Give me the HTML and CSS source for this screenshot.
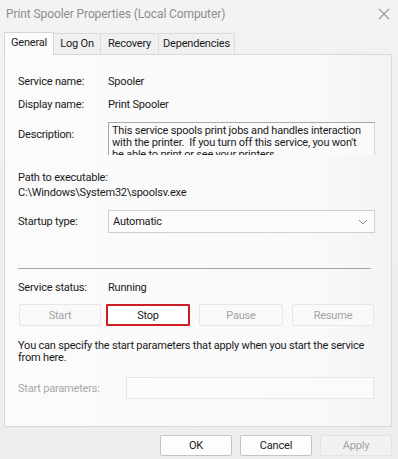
FILE: index.html
```html
<!DOCTYPE html>
<html lang="en">
<head>
    <meta charset="UTF-8">
    <title>Print Spooler Properties (Local Computer)</title>
    <link rel="stylesheet" href="styles.css">
</head>
<body>
    <div class="window">
        <div class="titlebar">
            <span class="title">Print Spooler Properties (Local Computer)</span>
            <svg class="close" width="12" height="12" viewBox="0 0 12 12">
                <path d="M1 1 L11 11 M11 1 L1 11" stroke="#9a9a9a" stroke-width="1.1" fill="none"/>
            </svg>
        </div>

        <div class="tabs">
            <div class="tab active tab-general">General</div>
            <div class="tab tab-logon">Log On</div>
            <div class="tab tab-recovery">Recovery</div>
            <div class="tab tab-deps">Dependencies</div>
        </div>

        <div class="panel">
            <div class="row row-name">
                <span class="label">Service name:</span>
                <span class="value">Spooler</span>
            </div>
            <div class="row row-display">
                <span class="label">Display name:</span>
                <span class="value">Print Spooler</span>
            </div>
            <div class="row row-desc">
                <span class="label">Description:</span>
                <div class="desc-box">This service spools print jobs and handles interaction with the printer.&nbsp; If you turn off this service, you won't be able to print or see your printers.</div>
            </div>

            <div class="path">
                <div>Path to executable:</div>
                <div>C:\Windows\System32\spoolsv.exe</div>
            </div>

            <div class="row row-startup">
                <span class="label">Startup type:</span>
                <div class="combo">
                    <span>Automatic</span>
                    <svg width="10" height="6" viewBox="0 0 10 6">
                        <path d="M1 1 L5 5 L9 1" stroke="#8c8c8c" stroke-width="1" fill="none"/>
                    </svg>
                </div>
            </div>

            <div class="separator"></div>

            <div class="row row-status">
                <span class="label">Service status:</span>
                <span class="value">Running</span>
            </div>

            <div class="actions">
                <button class="btn disabled btn-start">Start</button>
                <button class="btn highlight btn-stop">Stop</button>
                <button class="btn disabled btn-pause">Pause</button>
                <button class="btn disabled btn-resume">Resume</button>
            </div>

            <p class="note">You can specify the start parameters that apply when you start the service from here.</p>

            <div class="row row-params">
                <span class="label muted">Start parameters:</span>
                <div class="params-input"></div>
            </div>
        </div>

        <div class="footer">
            <button class="btn footer-btn">OK</button>
            <button class="btn footer-btn">Cancel</button>
            <button class="btn footer-btn disabled">Apply</button>
        </div>
    </div>
</body>
</html>
```

FILE: styles.css
```css
* {
    margin: 0;
    padding: 0;
    box-sizing: border-box;
}

body {
    font-family: Roboto, 'Liberation Sans', Arial, sans-serif;
    font-size: 11px;
    letter-spacing: -0.2px;
    color: #1a1a1a;
    background: #f0f0f0;
    width: 398px;
    height: 459px;
    overflow: hidden;
}

.window {
    height: 459px;
    background: linear-gradient(180deg, #f2f2f2 0%, #ededed 100%);
}

.titlebar {
    height: 27px;
    display: flex;
    align-items: center;
    justify-content: space-between;
    padding: 0 7px 0 6px;
    background: #f3f3f3;
}

.title {
    font-size: 12px;
    letter-spacing: -0.1px;
    color: #8d8d8d;
}

.close {
    margin-right: 1px;
}

.tabs {
    display: flex;
    align-items: flex-end;
    height: 27px;
    padding-left: 4px;
}

.tab {
    height: 21px;
    line-height: 20px;
    text-align: center;
    background: #f0f0f0;
    border: 1px solid #dcdcdc;
    border-bottom: none;
    margin-left: -1px;
}

.tab-general {
    width: 50px;
    margin-left: 0;
}

.tab-logon {
    width: 48px;
}

.tab-recovery {
    width: 59px;
}

.tab-deps {
    width: 77px;
}

.tab.active {
    height: 23px;
    background: #fcfcfc;
    border-color: #d4d4d4;
    position: relative;
    z-index: 1;
    margin-bottom: -1px;
    line-height: 19px;
}

.panel {
    margin: 0 6px 0 4px;
    height: 373px;
    background: linear-gradient(90deg, #fbfbfb 0%, #f9f9f9 80%, #f4f4f4 100%);
    border: 1px solid #d9d9d9;
    padding: 0 0 0 13px;
}

.row {
    display: flex;
    align-items: center;
}

.label {
    width: 90px;
    flex-shrink: 0;
}

.label.muted {
    color: #a8a8a8;
    width: 108px;
}

.row-name {
    margin-top: 18px;
    height: 16px;
}

.row-display {
    margin-top: 7px;
    height: 16px;
}

.row-desc {
    margin-top: 10px;
    align-items: flex-start;
}

.row-desc .label {
    padding-top: 6px;
}

.desc-box {
    width: 267px;
    height: 33px;
    overflow: hidden;
    border: 1px solid #a9a9a9;
    border-right-color: #d4d4d4;
    border-bottom: none;
    background: #fafafa;
    padding: 2px 4px 0 3px;
    line-height: 12px;
}

.path {
    margin-top: 15px;
    line-height: 15px;
}

.row-startup {
    margin-top: 10px;
}

.combo {
    width: 267px;
    height: 23px;
    display: flex;
    align-items: center;
    justify-content: space-between;
    padding: 0 6px 0 4px;
    border: 1px solid #cfcfcf;
    background: #fcfcfc;
}

.separator {
    margin-top: 35px;
    width: 353px;
    height: 1px;
    background: #a5a5a5;
}

.row-status {
    margin-top: 10px;
    height: 16px;
}

.actions {
    display: flex;
    margin-top: 9px;
    margin-left: 1px;
}

.btn {
    font-family: inherit;
    font-size: 11px;
    letter-spacing: -0.2px;
    height: 22px;
    background: #fbfbfb;
    border: 1px solid #d0d0d0;
    border-radius: 2px;
    color: #1a1a1a;
}

.btn.disabled {
    color: #a3a3a3;
    border-color: #e6e6e6;
    background: #f9f9f9;
}

.btn-start {
    width: 82px;
}

.btn-stop {
    width: 84px;
    margin-left: 5px;
}

.btn-pause {
    width: 84px;
    margin-left: 9px;
}

.btn-resume {
    width: 82px;
    margin-left: 9px;
}

.actions .btn.highlight {
    background: #ffffff;
    border: 2px solid #cc1f25;
    border-radius: 1px;
}

.note {
    margin-top: 14px;
    line-height: 12px;
    width: 362px;
}

.row-params {
    margin-top: 13px;
}

.params-input {
    width: 248px;
    height: 22px;
    border: 1px solid #e6e6e6;
    background: #fbfbfb;
}

.footer {
    display: flex;
    justify-content: flex-end;
    gap: 8px;
    padding: 8px 6px 0 0;
}

.footer-btn {
    width: 72px;
    height: 21px;
    border-color: #c4c4c4;
    background: #fdfdfd;
}

.footer-btn.disabled {
    border-color: #e3e3e3;
    background: #f1f1f1;
}
```
